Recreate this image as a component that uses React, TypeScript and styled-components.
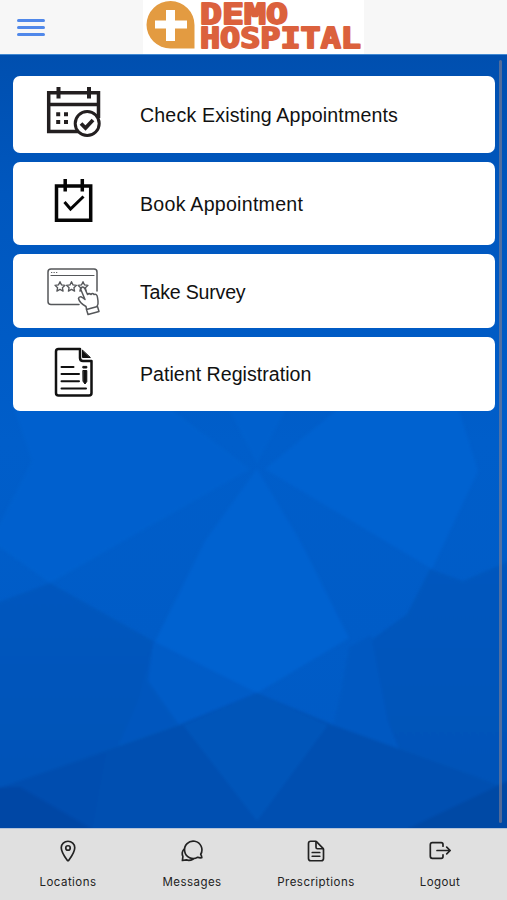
import React from "react";
import styled, { createGlobalStyle } from "styled-components";
import { IoLocationOutline, IoDocumentTextOutline } from "react-icons/io5";

const GlobalStyle = createGlobalStyle`
  *, *::before, *::after { box-sizing: border-box; }
  body { margin: 0; font-family: "Liberation Sans", Arial, sans-serif; }
`;

const Screen = styled.div`
  display: flex;
  flex-direction: column;
  width: 507px;
  height: 900px;
  overflow: hidden;
`;

const Header = styled.header`
  display: grid;
  grid-template-columns: 143px 221px 1fr;
  height: 54px;
  flex: none;
  background: #f7f7f7;
`;

const MenuButton = styled.button`
  display: flex;
  flex-direction: column;
  gap: 4.3px;
  width: 28.5px;
  height: 18px;
  margin: 19.2px 0 0 16.5px;
  padding: 0;
  border: 0;
  background: none;
`;

const MenuBar = styled.span`
  flex: none;
  height: 2.7px;
  border-radius: 1.5px;
  background: #5088ea;
`;

const LogoBox = styled.div`
  height: 54px;
  background: #fff;
  svg { display: block; }
`;

const LogoText = styled.text`
  font-family: "DejaVu Sans Mono", monospace;
  font-weight: 700;
  fill: #db613d;
  stroke: #db613d;
  stroke-width: 1.8px;
  stroke-linejoin: round;
`;

const Main = styled.main`
  position: relative;
  flex: 1;
  border-top: 1px solid #4289d2;
  background: #0058c4;
  overflow: hidden;
`;

const Backdrop = styled.svg`
  position: absolute;
  inset: 0;
`;

const CardList = styled.nav`
  position: relative;
  display: flex;
  flex-direction: column;
  gap: 8.7px;
  padding: 20.5px 12.5px 0 13px;
`;

const Card = styled.a<{ $height: number }>`
  display: grid;
  grid-template-columns: 127px 1fr;
  align-items: center;
  height: ${(p) => p.$height}px;
  border-radius: 7px;
  background: #fff;
  color: #111;
  font-size: 19.6px;
  white-space: nowrap;
`;

const CardIcon = styled.span<{ $top: number }>`
  align-self: start;
  margin: ${(p) => p.$top}px 0 0 32px;
  svg { display: block; }
`;

const CardLabel = styled.span<{ $tracking: number }>`
  justify-self: start;
  padding-top: 2px;
  letter-spacing: ${(p) => p.$tracking}px;
`;

const ScrollThumb = styled.div`
  position: absolute;
  top: 5px;
  right: 5px;
  width: 3.5px;
  height: 763px;
  border-radius: 2px;
  background: rgba(125, 125, 145, 0.65);
`;

const TabBar = styled.footer`
  display: grid;
  grid-template-columns: repeat(4, 124px);
  justify-content: center;
  flex: none;
  height: 72px;
  border-top: 1px solid #b3c3d9;
  background: #e0e0e0;
`;

const Tab = styled.a`
  display: flex;
  flex-direction: column;
  align-items: center;
  gap: 11px;
  padding: 10px 0 0 1px;
  color: #222;
  font: 400 11.5px/17px Inter, sans-serif;
  letter-spacing: 0.45px;
  svg { display: block; flex: none; }
  svg * { stroke-width: 36px; }
`;

const Logo = () => (
  <svg width="221" height="54" viewBox="143 0 221 54">
    <path d="M194.500 48.500H170.500A24 23.700 0 1 1 194.500 25Z" fill="#e39b41" />
    <path d="M166 10h9v10.500h12v8h-12V41h-9V28.500h-11v-8h11z" fill="#fff" />
    <LogoText x="200" y="24" fontSize="28" textLength="88" lengthAdjust="spacingAndGlyphs">DEMO</LogoText>
    <LogoText x="200" y="48.300" fontSize="27.500" textLength="161" lengthAdjust="spacingAndGlyphs">HOSPITAL</LogoText>
  </svg>
);

const PolygonBackdrop = () => (
  <Backdrop width="507" height="774" viewBox="0 54 507 774">
    <defs>
      <linearGradient id="base" x1="0" y1="0" x2="0" y2="1">
        <stop offset="0" stopColor="#004faf" />
        <stop offset="0.18" stopColor="#0057be" />
        <stop offset="0.5" stopColor="#005eca" />
        <stop offset="1" stopColor="#005ac4" />
      </linearGradient>
      <linearGradient id="lower" x1="0" y1="0" x2="0" y2="1">
        <stop offset="0" stopColor="#0057be" />
        <stop offset="1" stopColor="#0052b7" />
      </linearGradient>
      <filter id="soften">
        <feGaussianBlur stdDeviation="1.500" />
      </filter>
    </defs>
    <rect y="54" width="507" height="774" fill="url(#base)" />
    <g filter="url(#soften)">
      <path d="M12 400H160L250 468 50 582 -9 540 32 460Z" fill="#0061ce" />
      <path d="M348 400H456L478 470 432 568 265 468Z" fill="#0062d0" />
      <path d="M225 400H290L257 462Z" fill="#0061cd" />
      <path d="M257 468L300 540 349 637 257 692 155 641 205 540Z" fill="#0062d0" />
      <path d="M-9 604L50 582 155 641 140 700 118 748 -9 790Z" fill="url(#lower)" />
      <path d="M430 568L463 580 516 557V789L400 750 387 720 370 640 407 613Z" fill="url(#lower)" />
      <path d="M349 646L371 634 388 720 400 752 333 724 341 690Z" fill="#0058c1" />
      <path d="M153 641L257 692 179 724 148 680Z" fill="#005cc7" />
      <path d="M153 641L148 680 179 724 116 750 138 700Z" fill="#0057be" />
      <path d="M-9 790L179 724 257 692 333 724 516 790V840H-9Z" fill="#0050b1" />
      <path d="M183 724L257 692 328 724 257 820Z" fill="#0054b9" />
      <path d="M-9 790L106 752 90 840H-9Z" fill="#004daf" />
      <path d="M-9 787L20 786 92 828V840H-9Z" fill="#0046a5" />
      <path d="M407 840V828L516 776V840Z" fill="#0048a5" />
    </g>
  </Backdrop>
);

const CalendarCheckIcon = () => (
  <svg width="56" height="54" viewBox="45 85 56 54" fill="none" stroke="#231f20" strokeWidth="3.500">
    <path d="M79 131.500H48.700V92.700H98.500V118M48.500 104.500H98.500" />
    <path d="M58.500 87v11.500M89 87v11.500" strokeWidth="4" />
    <path d="M56.200 114.200h4M64 114.200h4M56.200 122h4M64 122h4" strokeWidth="4" />
    <circle cx="87.200" cy="123.500" r="12" fill="#fff" strokeWidth="3" />
    <path d="M81 123.500l4.500 4.500L93 120" strokeWidth="3.800" />
  </svg>
);

const CalendarIcon = () => (
  <svg width="56" height="50" viewBox="45 175 56 50" fill="none" stroke="#050505" strokeWidth="3">
    <path d="M56.500 186H90.700V220.200H56.500z" strokeWidth="3.500" />
    <path d="M65.200 179v12.500M82.300 179v12.500" strokeWidth="3.500" />
    <path d="M64.500 202l6 7L83.500 196.500" />
  </svg>
);

const stars = [60, 71.5, 83];

const SurveyIcon = () => (
  <svg width="58" height="52" viewBox="45 265 58 52" fill="none" stroke="#55575a" strokeWidth="1.500" strokeLinejoin="round" strokeLinecap="round">
    <path d="M79 304.500H51Q48 304.500 48 301.500V272Q48 269 51 269H94Q97 269 97 272V291" />
    <path d="M51 275.500H94M51.500 272.500h.3M54 272.500h.3M56.500 272.500h.3" strokeWidth="1.200" />
    {stars.map((x) => (
      <path
        key={x}
        transform={`translate(${x} 286.500)`}
        d="M0-4.800L1.500-1.600 5-1.200 2.400 1.200 3.100 4.600 0 2.900-3.100 4.600-2.400 1.200-5-1.200-1.500-1.600z"
        strokeWidth="1.300"
      />
    ))}
    <path
      d="M86.500 309L86 306.500Q79.500 303 78.500 298.500Q79.500 295.500 83 298L85 299.500 81 290Q80.500 287.500 82.500 287Q84 286.800 85 289L87.500 294.500Q89 292.800 91 294.500Q92.500 292.600 94 294.500Q97 293.500 97.500 297.500L98 301Q98.500 304 97 306.500"
      fill="#fff"
    />
    <path d="M86.500 309.500L97.500 306.500 99 311.500 88 314.500z" fill="#fff" />
  </svg>
);

const FormIcon = () => (
  <svg width="56" height="56" viewBox="45 345 56 56" fill="none" stroke="#111" strokeWidth="2.500" strokeLinejoin="round" strokeLinecap="round">
    <path d="M80 349H58.500Q56 349 56 351.500V393Q56 395.500 58.500 395.500H89Q91.500 395.500 91.500 393V361H83Q80 361 80 358z" />
    <path d="M82.500 350.500V357.500H90z" fill="#111" strokeWidth="1" />
    <path d="M61.500 367h12M61.500 374h17.500M61.500 381.200h17.500M61.500 388.500h24.500" strokeWidth="2" />
    <path d="M83.200 366.400h3.600v1.600h-3.600zM83.200 370.500h3.600V381.500L85 384 83.200 381.500z" fill="#111" strokeWidth="1" />
  </svg>
);

const TabGlyph = styled.svg`
  && * { stroke-width: 1.7px; }
`;

const MessagesIcon = () => (
  <TabGlyph width="24" height="24" viewBox="0 0 24 24" fill="none" stroke="#222" strokeLinecap="round" strokeLinejoin="round">
    <path d="M20.700 15.300A8.700 8.700 0 1 0 17.700 18.300Q19.500 19 21.800 18.700Q21.600 16.700 20.700 15.300Z" />
    <path d="M3.800 10.500Q1.200 13.500 2.900 17.500L2.400 21.500 6.300 20.900Q9.500 22 13 20.200" />
  </TabGlyph>
);

const LogoutIcon = () => (
  <TabGlyph width="24" height="24" viewBox="0 0 24 24" fill="none" stroke="#222" strokeLinecap="round" strokeLinejoin="round">
    <path d="M15 7.200V5.500Q15 3.700 13.200 3.700H4.300Q2.300 3.700 2.300 5.700V17.300Q2.300 19.300 4.300 19.300H13.200Q15 19.300 15 17.500V15.800" />
    <path d="M9 11.500H22M18.700 8.200L22.200 11.500 18.700 14.800" />
  </TabGlyph>
);

const cards = [
  { label: "Check Existing Appointments", height: 77.7, top: 9.5, tracking: 0.16, icon: <CalendarCheckIcon /> },
  { label: "Book Appointment", height: 83.3, top: 13, tracking: 0.26, icon: <CalendarIcon /> },
  { label: "Take Survey", height: 74.3, top: 11, tracking: -0.22, icon: <SurveyIcon /> },
  { label: "Patient Registration", height: 74.3, top: 8, tracking: 0.02, icon: <FormIcon /> },
];

const tabs = [
  { label: "Locations", icon: <IoLocationOutline size={24} /> },
  { label: "Messages", icon: <MessagesIcon /> },
  { label: "Prescriptions", icon: <IoDocumentTextOutline size={24} /> },
  { label: "Logout", icon: <LogoutIcon /> },
];

export default function App() {
  return (
    <Screen>
      <GlobalStyle />
      <Header>
        <MenuButton aria-label="Menu">
          <MenuBar />
          <MenuBar />
          <MenuBar />
        </MenuButton>
        <LogoBox>
          <Logo />
        </LogoBox>
      </Header>
      <Main>
        <PolygonBackdrop />
        <CardList>
          {cards.map((c) => (
            <Card key={c.label} $height={c.height}>
              <CardIcon $top={c.top}>{c.icon}</CardIcon>
              <CardLabel $tracking={c.tracking}>{c.label}</CardLabel>
            </Card>
          ))}
        </CardList>
        <ScrollThumb />
      </Main>
      <TabBar>
        {tabs.map(({ label, icon }) => (
          <Tab key={label}>
            {icon}
            {label}
          </Tab>
        ))}
      </TabBar>
    </Screen>
  );
}
